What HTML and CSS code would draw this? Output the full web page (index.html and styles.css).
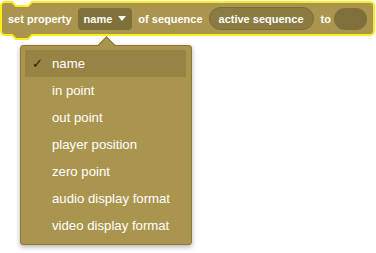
FILE: index.html
```html
<!DOCTYPE html>
<html lang="en">
<head>
    <title>Set Property Block</title>
    <link rel="stylesheet" href="styles.css">
</head>
<body>

    <div class="block">
        <svg class="block-shape" width="376" height="42" viewBox="0 0 376 42">
            <path d="M1,6 a4,4 0 0 1 4,-4 H12 l4,4 H28 l4,-4 H370 a4,4 0 0 1 4,4 V31 a4,4 0 0 1 -4,4 H32 l-4,4 H16 l-4,-4 H5 a4,4 0 0 1 -4,-4 Z"
                  fill="#aa954f" stroke="#fbec1c" stroke-width="2"/>
        </svg>
        <div class="block-row">
            <span class="label">set property</span>
            <span class="field">name <span class="caret"></span></span>
            <span class="label">of sequence</span>
            <span class="pill">active sequence</span>
            <span class="label">to</span>
            <span class="slot"></span>
        </div>
    </div>

    <div class="menu">
        <div class="menu-arrow"></div>
        <ul class="menu-list">
            <li class="item selected"><span class="check">✓</span>name</li>
            <li class="item">in point</li>
            <li class="item">out point</li>
            <li class="item">player position</li>
            <li class="item">zero point</li>
            <li class="item">audio display format</li>
            <li class="item">video display format</li>
        </ul>
    </div>

</body>
</html>
```

FILE: styles.css
```css
body {
    margin: 0;
    background: white;
    font-family: "Liberation Sans", Arial, sans-serif;
    width: 376px;
    height: 253px;
    overflow: hidden;
    position: relative;
}
.block {
    position: relative;
    height: 42px;
}
.block-shape {
    position: absolute;
    left: 0;
    top: 0;
}
.block-row {
    position: relative;
    display: flex;
    align-items: center;
    height: 37px;
    padding-left: 8px;
    color: white;
    font-size: 11px;
    font-weight: bold;
}
.label {
    margin-right: 6px;
}
.field {
    display: flex;
    align-items: center;
    height: 22px;
    padding: 0 6px 0 6px;
    margin-right: 6px;
    background: #7f6f39;
    border-radius: 4px;
}
.caret {
    display: inline-block;
    margin-left: 6px;
    border-left: 4px solid transparent;
    border-right: 4px solid transparent;
    border-top: 5px solid white;
}
.pill {
    display: flex;
    align-items: center;
    height: 21px;
    padding: 0 9px;
    margin-right: 7px;
    background: #8b7b42;
    border: 1px solid #7b6b36;
    border-radius: 12px;
}
.slot {
    width: 33px;
    height: 22px;
    background: #7f6f3a;
    border-radius: 11px;
    margin-left: -3px;
}
.menu {
    position: absolute;
    left: 20px;
    top: 45px;
    width: 170px;
    height: 198px;
    background: #aa954f;
    border: 1px solid #8a7838;
    border-radius: 3px;
    box-shadow: 0 2px 5px rgba(0, 0, 0, 0.3);
}
.menu-arrow {
    position: absolute;
    left: 79px;
    top: -7px;
    width: 12px;
    height: 12px;
    background: #aa954f;
    border-top: 1px solid #8a7838;
    border-left: 1px solid #8a7838;
    transform: rotate(45deg);
}
.menu-list {
    position: relative;
    list-style: none;
    margin: 0;
    padding: 4px 5px 0 4px;
}
.item {
    position: relative;
    height: 27px;
    line-height: 27px;
    padding-left: 27px;
    color: white;
    font-size: 13.2px;
}
.selected {
    background: #978445;
}
.check {
    position: absolute;
    left: 7px;
    color: #1e1a0e;
    font-family: "DejaVu Sans", sans-serif;
    font-size: 13px;
}
```
